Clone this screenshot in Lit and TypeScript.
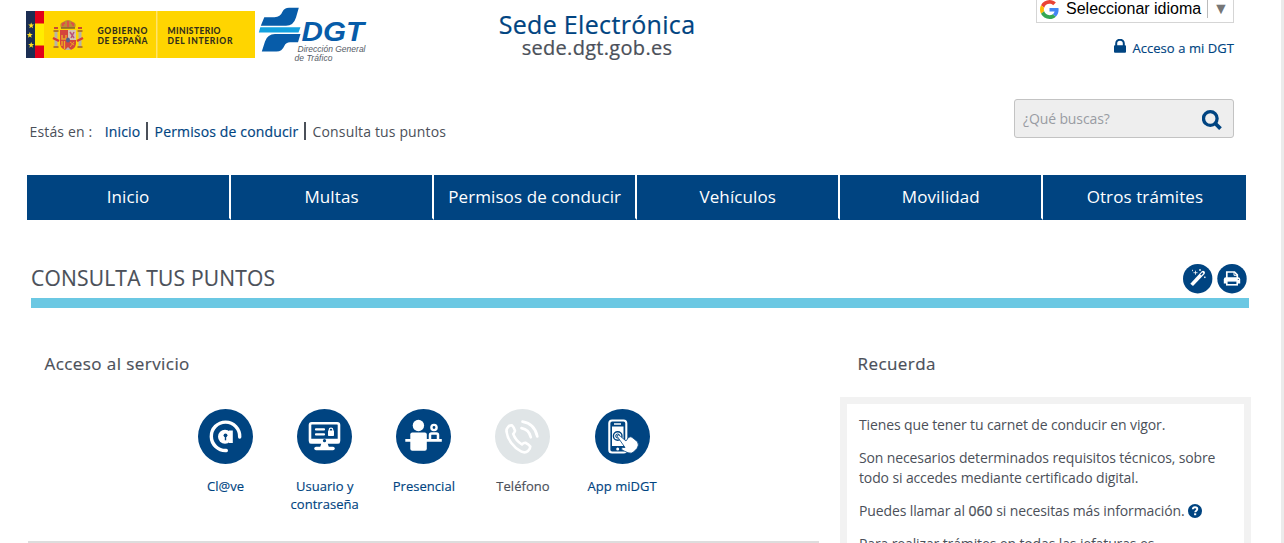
import { LitElement, html, css, svg } from "lit";
import { customElement } from "lit/decorators.js";
import { classMap } from "lit/directives/class-map.js";

const governmentLogo = html`<svg class="gov" width="229" height="47" viewBox="0 0 229 47">
  <rect width="229" height="47" fill="#ffd500"/>
  <rect width="9" height="47" fill="#1b2e53"/>
  <rect x="9" width="9" height="47" fill="#e2001a"/>
  <rect x="9" y="12.5" width="9" height="22" fill="#ffed00"/>
  <g fill="#ffdf20">
    ${[14.5, 24, 34].map((y, i) => svg`<path transform="translate(${i === 1 ? 3.8 : 5.2} ${y})" d="M0-3L.8-.9 3-.9 1.2.5 1.9 2.7 0 1.4-1.9 2.7-1.2.5-3-.9-.8-.9z"/>`)}
  </g>
  <g transform="translate(42 25)">
    <path d="M-7-8Q-9-13-5-14Q-2-16 0-16Q2-16 5-14Q9-13 7-8z" fill="#bd8a35"/>
    <path d="M-5-10Q-6-13-3-13M0-9v-6M5-10Q6-13 3-13" stroke="#e2474b" stroke-width="1.6" fill="none"/>
    <path d="M-7-8h14" stroke="#87652d" stroke-width="1.5"/>
    <path d="M-12-4v15M12-4v15" stroke="#b8b4a5" stroke-width="3"/>
    <path d="M-14.5-5h5M9.500-5h5M-14.500 11h5M9.500 11h5" stroke="#b5782b" stroke-width="2"/>
    <path d="M-14-8h4M10-8h4" stroke="#c94c31" stroke-width="2"/>
    <path d="M-15 2l6 3M15 2l-6 3" stroke="#d83c35" stroke-width="2.500"/>
    <path d="M-8-6H8V8Q7 14 0 14Q-7 14-8 8z" fill="#d5453c"/>
    <path d="M0-6h8V4H0z" fill="#d6c3b1"/>
    <path d="M2-4l4 6M6-4L3 2" stroke="#bb5277" stroke-width="1.500"/>
    <path d="M-6-1v4h4v-4M-6 3h4" stroke="#e6a72c" stroke-width="1.500" fill="none"/>
    <path d="M-6 5v5M-3.500 5v8" stroke="#edaf23" stroke-width="1.300"/>
    <path d="M2 6l4 3M2 11l4-5" stroke="#e9a526" stroke-width="1"/>
    <ellipse cy="4" rx="2" ry="2.500" fill="#54618e"/>
    <path d="M-3 14L0 11 3 14z" fill="#b8b4a5"/>
  </g>
  <rect x="130" width="1.500" height="47" fill="#ffe36b"/>
  <g class="gov-text">
    <text x="71.500" y="23" textLength="50">GOBIERNO</text>
    <text x="71.500" y="32.500" textLength="50">DE ESPAÑA</text>
    <text x="141.500" y="23" textLength="53">MINISTERIO</text>
    <text x="141.500" y="32.500" textLength="65">DEL INTERIOR</text>
  </g>
</svg>`;

const dgtLogo = html`<svg class="dgt" width="110" height="64" viewBox="258 0 110 64">
  <path d="M260.800 25.800L264.300 17.300H274.500Q280.500 17 282.300 12Q284.500 7.800 289 7.800H298.800L296 17.500Q293.500 25.800 286 25.800z" fill="#075ca9"/>
  <path d="M258.800 32.500L260.300 27.300H300.500L298.500 32.500z" fill="#13a1df"/>
  <path d="M261.800 51.500L265 41.500Q267.500 34 275 34H300.500L298 42.300H290Q286 42.300 284.300 46Q282 51.500 276.500 51.500z" fill="#075ca9"/>
  <text class="dgt-name" x="301.500" y="41" textLength="62.500" lengthAdjust="spacingAndGlyphs">DGT</text>
  <text class="dgt-sub" x="297.500" y="52" textLength="68">Dirección General</text>
  <text class="dgt-sub" x="294.500" y="61" textLength="38">de Tráfico</text>
</svg>`;

const googleLogo = html`<svg class="google" width="19" height="19" viewBox="0 0 48 48">
  <path fill="#ea4335" d="M24 9.500c3.500 0 6.700 1.200 9.200 3.600l6.900-6.900C35.900 2.400 30.500 0 24 0 14.600 0 6.500 5.400 2.600 13.200l8 6.200C12.400 13.700 17.700 9.500 24 9.500z"/>
  <path fill="#4285f4" d="M47 24.600c0-1.600-.2-3.100-.4-4.600H24v9h12.900c-.6 3-2.200 5.500-4.700 7.200l7.700 6C44.400 38 47 31.800 47 24.600z"/>
  <path fill="#fbbc05" d="M10.500 28.600c-.5-1.500-.8-3-.8-4.600s.3-3.100.8-4.600l-8-6.200C.9 16.500 0 20.100 0 24s.9 7.500 2.600 10.800z"/>
  <path fill="#34a853" d="M24 48c6.500 0 11.900-2.100 15.900-5.800l-7.700-6c-2.200 1.400-4.900 2.300-8.200 2.300-6.300 0-11.600-4.200-13.500-9.900l-8 6.200C6.500 42.600 14.600 48 24 48z"/>
</svg>`;

const lockIcon = html`<svg width="12" height="14" viewBox="0 0 12 14"><path d="M2.200 7V4.500a3.800 3.800 0 0 1 7.600 0V7" fill="none" stroke="#004481" stroke-width="2"/><rect y="6.200" width="12" height="7.600" rx="1" fill="#004481"/></svg>`;
const searchIcon = html`<svg width="20" height="20" viewBox="0 0 20 20" fill="none" stroke="#004481"><circle cx="8.300" cy="8.500" r="6.800" stroke-width="3.300"/><path d="M13.300 13.500l5.200 5.200" stroke-width="3.800" stroke-linecap="butt"/></svg>`;

const wandIcon = html`<svg width="30" height="30" viewBox="0 0 30 30"><circle cx="14.700" cy="14.700" r="14.700" fill="#004481"/>
  <path d="M7.300 19.700L18.800 7.300Q20 6.100 21.600 7.600Q22.500 8.900 21.500 10L10 22z" fill="#fff"/><path d="M17.800 10.900l2-2.200" stroke="#004481" stroke-width="1.500"/>
  <path d="M12.500 6.700v4M10.500 8.700h4M17 5v2M16 6h2M9.500 5.800v1.400M21.800 12.500v1.600M21 13.300h1.600" stroke="#fff" stroke-width=".8"/></svg>`;
const printIcon = html`<svg width="30" height="30" viewBox="0 0 30 30"><circle cx="15" cy="14.700" r="14.700" fill="#004481"/>
  <path d="M9.800 15V8h7.700l2.800 2.800V15" fill="none" stroke="#fff" stroke-width="1.700"/><path d="M17 8v3.300h3.300" fill="none" stroke="#fff"/>
  <path d="M9 13.300h12q2.200 0 2.200 2.200v4H6.800v-4q0-2.200 2.200-2.200z" fill="#fff"/><rect x="9.800" y="16.800" width="10.400" height="4" fill="#004481" stroke="#fff" stroke-width="1.600"/><circle cx="21.300" cy="15.500" r=".6" fill="#004481"/></svg>`;
const helpIcon = html`<svg class="help" width="14" height="14" viewBox="0 0 14 14"><circle cx="7" cy="7" r="7" fill="#004481"/><path d="M4.800 5.200C4.900 3.600 6 3.200 7 3.200c1.300 0 2.300.7 2.300 1.900C9.300 6.700 7.200 6.600 7.200 8.300" fill="none" stroke="#fff" stroke-width="1.900"/><rect x="6.100" y="9.300" width="2.100" height="1.900" fill="#fff"/></svg>`;

const services = [
  { label: "Cl@ve", icon: svg`
    <path d="M41.700 28A14.200 14.200 0 1 0 28.300 41.500" fill="none" stroke="#fff" stroke-width="3.400" stroke-linecap="round"/>
    <path d="M31 21.500h3.800V34H31z" fill="#fff"/><circle cx="27" cy="27.700" r="7" fill="#fff"/><circle cx="27.500" cy="26.300" r="1.900" fill="#004481"/><path d="M27.500 27v4.300" stroke="#004481" stroke-width="1.400"/>` },
  { label: "Usuario y contraseña", icon: svg`
    <rect x="13" y="14.300" width="29" height="19" rx="1.700" fill="none" stroke="#fff" stroke-width="2.600"/>
    <path d="M12.500 29.700h30v4.800h-30zM24.500 34h6l1.500 4.500h-9z" fill="#fff"/><circle cx="27.500" cy="31.700" r="1.600" fill="#004481"/>
    <path d="M19 20.400h8M19 25.400h8" stroke="#fff" stroke-width="2.200" stroke-linecap="round"/><rect x="31" y="21.500" width="6" height="5.500" rx=".7" fill="#fff"/><path d="M32.200 22v-1a1.800 1.800 0 0 1 3.600 0v1" fill="none" stroke="#fff" stroke-width="1.200"/>
    <path d="M19 39.400h17" stroke="#fff" stroke-width="3.500" stroke-linecap="round"/>` },
  { label: "Presencial", icon: svg`
    <g fill="#fff"><circle cx="22.400" cy="16.500" r="5.700"/><rect x="14.300" y="23.500" width="16.500" height="18.300" rx="2"/><path d="M9.300 31.300h36.500" stroke="#fff" stroke-width="2.800"/></g>
    <circle cx="38" cy="18.500" r="2.600" fill="none" stroke="#fff" stroke-width="2.400"/><path d="M34 31v-5q0-1.400 1.500-1.400h5q1.500 0 1.500 1.400v5" fill="none" stroke="#fff" stroke-width="2.500"/>` },
  { label: "Teléfono", off: true, icon: svg`
    <path d="M12.800 18.300Q14.600 16 16.800 16.200Q19.500 18.900 20 21.800Q19.300 24 18.200 24.900C19.600 29 22.900 33 27 35.500Q28.600 33.500 30.500 33.700Q33.700 35.200 35.300 37.500Q35.300 40 33 42Q30 44.500 26 42.400C18.500 38.400 12.500 30.500 11.500 22.500Q11.300 20 12.800 18.300z" fill="none" stroke="#fff" stroke-width="2.600" stroke-linejoin="round"/>
    <path d="M26.500 19.200Q34 20.500 35.800 28.300M27.500 12.700Q39.500 14.500 42.300 27.500" fill="none" stroke="#fff" stroke-width="2.700" stroke-linecap="round"/>` },
  { label: "App miDGT", icon: svg`
    <rect x="14.300" y="11.500" width="17" height="32" rx="2.800" fill="none" stroke="#fff" stroke-width="2.100"/><path d="M19 15h7" stroke="#fff" stroke-width="1.500"/>
    <rect x="17" y="17.500" width="11.500" height="19.500" fill="#fff"/><circle cx="22.700" cy="27" r="4.300" fill="none" stroke="#004481" stroke-width="1.400"/><circle cx="22.700" cy="27" r="2" fill="none" stroke="#004481"/><circle cx="22.700" cy="40" r="1.500" fill="#fff"/>
    <path d="M21.800 26.800Q23.700 25.300 25.100 27L31 32l2.500-3.600Q36 26.800 38 29L42.500 32.800Q44.500 36 42 39.500L38.500 43Q37 44.800 33 43.800L27 41Q25.500 38.700 28 38.500H30z" fill="#fff" stroke="#004481" stroke-width=".8"/>` },
];

@customElement("app-root")
export class AppRoot extends LitElement {
  static styles = css`
    :host { display: block; height: 543px; overflow: hidden; box-sizing: border-box; border-right: 3px solid #ebebeb; background: #fff; color: #4b5059; font-family: "Open Sans", sans-serif; }
    * { box-sizing: border-box; }
    svg { display: block; flex: none; }
    a { color: #004481; text-decoration: none; }
    h1, h2, p, ul { margin: 0; padding: 0; font-weight: 400; }
    .header { display: grid; grid-template-columns: 369px 456px 409px; height: 99px; align-items: start; }
    .logos { display: flex; padding-left: 26px; }
    .gov { margin: 11px 3px 0 0; }
    .gov-text { font: 900 8.500px Lato, sans-serif; fill: #33301c; }
    .dgt-name { font: italic 700 28.500px "Liberation Sans", sans-serif; fill: #075ca9; }
    .dgt-sub { font: italic 8.500px "Liberation Sans", sans-serif; fill: #555b66; }
    .site { text-align: center; padding-top: 13px; -webkit-text-stroke: .22px; }
    .site-title { color: #004481; font-size: 25px; line-height: 23px; letter-spacing: .33px; }
    .site-url { font-size: 20px; line-height: 24px; letter-spacing: .3px; }
    .tools { display: flex; flex-direction: column; align-items: flex-end; }
    .language { display: flex; align-items: center; width: 198px; height: 23px; padding: 0 6px 5px 3px; border: 1px solid #d5d5d5; border-top: 0; font: 16px/18px "Liberation Sans", sans-serif; color: #000; }
    .google { margin-top: 1px; }
    .language-name { margin-left: 7px; white-space: nowrap; }
    .arrow { margin-left: auto; border-left: 1px solid #bbb; padding-left: 5px; color: #767676; width: 20px; }
    .account { display: flex; align-items: center; gap: 6px; margin-top: 15px; font-size: 13px; line-height: 20px; letter-spacing: .06px; -webkit-text-stroke: .15px; }
    .account svg { margin-top: -4px; }
    .finder { display: flex; justify-content: space-between; height: 76px; padding: 0 47px 0 29.500px; }
    .trail { display: flex; height: 18px; margin-top: 23px; font-size: 14px; line-height: 20px; white-space: nowrap; letter-spacing: .15px; }
    .trail > * + * { margin-left: 5.500px; padding-left: 6.700px; border-left: 2px solid #4b5059; }
    .trail > .first { border: 0; margin-left: 5.800px; }
    .trail a { -webkit-text-stroke: .18px; }
    .search { display: flex; justify-content: space-between; align-items: center; width: 220px; height: 39px; padding: 3px 11px 0 8px; background: #eee; border: 1px solid #c3c3c3; border-radius: 3px; color: #999ca3; font-size: 14px; letter-spacing: -.12px; }
    .search span { margin-top: -4px; }
    .menu { display: grid; grid-template-columns: 204px repeat(5, 203.100px); width: 1219px; height: 45px; margin-left: 27px; background: #004481; overflow: hidden; }
    .menu a { color: #fff; font-size: 17px; line-height: 44px; height: 45px; text-align: center; white-space: nowrap; letter-spacing: .1px; border-right: 2px solid #fff; border-bottom: 2px solid #004481; }
    .menu a:last-child { border-right: 0; }
    .heading { display: flex; justify-content: space-between; align-items: flex-start; width: 1218px; height: 88px; margin: 0 0 0 31px; padding: 44px 2px 0 0; border-bottom: 10px solid #6bc8e3; }
    .heading h1 { font-size: 21px; line-height: 28px; letter-spacing: .2px; -webkit-text-stroke: .15px; }
    .actions { display: flex; gap: 4.500px; }
    .content { display: grid; grid-template-columns: 791px 411px; column-gap: 21px; padding-left: 28px; height: 235px; }
    h2 { font-size: 17px; line-height: 24px; height: 89px; padding: 44px 0 0 16.500px; letter-spacing: .43px; -webkit-text-stroke: .18px; }
    aside h2 { padding-left: 17.500px; }
    .access { border-bottom: 2px solid #ddd; height: 235px; }
    .services { display: flex; margin: 12px 0 0 148px; list-style: none; }
    .services li { width: 99.150px; display: flex; flex-direction: column; align-items: center; color: #004481; font-size: 13px; line-height: 18px; text-align: center; letter-spacing: .04px; -webkit-text-stroke: .15px; }
    .services li span { width: 88px; margin-top: 13px; }
    .services .off { color: #4b5059; }
    .panel { border: 7px solid #f2f2f2; padding: 11px 20px 0 12px; height: 180px; font-size: 14px; line-height: 20px; letter-spacing: -.125px; }
    .panel p { margin-bottom: 13px; white-space: nowrap; }
    .panel b { font-weight: 400; letter-spacing: .1px; -webkit-text-stroke: .25px; }
    .help { display: inline-block; vertical-align: -2px; }
  `;

  render() {
    return html`
      <header class="header">
        <div class="logos">${governmentLogo}${dgtLogo}</div>
        <div class="site"><div class="site-title">Sede Electrónica</div><div class="site-url">sede.dgt.gob.es</div></div>
        <div class="tools">
          <div class="language">${googleLogo}<span class="language-name">Seleccionar idioma</span><span class="arrow">▼</span></div>
          <a class="account">${lockIcon}<span>Acceso a mi DGT</span></a>
        </div>
      </header>
      <div class="finder">
        <div class="trail"><span>Estás en :</span><a class="first">Inicio</a><a>Permisos de conducir</a><span>Consulta tus puntos</span></div>
        <div class="search"><span>¿Qué buscas?</span>${searchIcon}</div>
      </div>
      <nav class="menu">${["Inicio", "Multas", "Permisos de conducir", "Vehículos", "Movilidad", "Otros trámites"].map((t) => html`<a>${t}</a>`)}</nav>
      <div class="heading"><h1>CONSULTA TUS PUNTOS</h1><div class="actions">${wandIcon}${printIcon}</div></div>
      <main class="content">
        <section class="access">
          <h2>Acceso al servicio</h2>
          <ul class="services">${services.map((s) => html`<li class=${classMap({ off: !!s.off })}>
            <svg width="55" height="55" viewBox="0 0 55 55"><circle cx="27.500" cy="27.500" r="27.500" fill=${s.off ? "#e0e5e7" : "#004481"}/>${s.icon}</svg><span>${s.label}</span></li>`)}</ul>
        </section>
        <aside>
          <h2>Recuerda</h2>
          <div class="panel">
            <p>Tienes que tener tu carnet de conducir en vigor.</p>
            <p>Son necesarios determinados requisitos técnicos, sobre<br>todo si accedes mediante certificado digital.</p>
            <p>Puedes llamar al <b>060</b> si necesitas más información. ${helpIcon}</p>
            <p>Para realizar trámites en todas las jefaturas es</p>
          </div>
        </aside>
      </main>`;
  }
}
